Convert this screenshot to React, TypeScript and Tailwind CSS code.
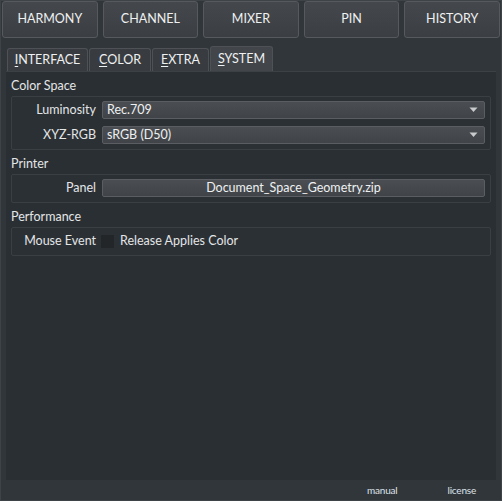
import { ReactNode } from 'react';

const topButtons = ['HARMONY', 'CHANNEL', 'MIXER', 'PIN', 'HISTORY'];

const tabs = [
  { key: 'I', rest: 'NTERFACE', w: 'w-[81px]' },
  { key: 'C', rest: 'OLOR', w: 'w-[62px]' },
  { key: 'E', rest: 'XTRA', w: 'w-[57px]' },
  { key: 'S', rest: 'YSTEM', w: 'w-[63px]', active: true },
];

function Arrow() {
  return (
    <svg width="9" height="6" viewBox="0 0 9 6" className="shrink-0">
      <path d="M0.5 0.5 H8.5 L4.5 5 Z" fill="#c8cacc" />
    </svg>
  );
}

function Combo({ value }: { value: string }) {
  return (
    <div className="flex h-[18px] flex-1 items-center justify-between rounded-[2px] border border-[#5a5e62] bg-gradient-to-b from-[#4a4e52] to-[#404448] pl-[4px] pr-[6px] text-[#eff0f1]">
      <span>{value}</span>
      <Arrow />
    </div>
  );
}

function Row({ label, children }: { label: string; children: ReactNode }) {
  return (
    <div className="flex items-center">
      <div className="w-[85px] pr-[6px] text-right text-[#e3e5e7]">{label}</div>
      {children}
    </div>
  );
}

function Group({ title, children }: { title: string; children: ReactNode }) {
  return (
    <div>
      <div className="flex h-[19px] items-center text-[#e3e5e7]">{title}</div>
      <div className="rounded-[2px] border border-[#3a3f43] bg-[#2b3034] px-[5px]">{children}</div>
    </div>
  );
}

export default function App() {
  return (
    <div
      className="flex h-[501px] w-[502px] flex-col border border-[#3e4347] bg-[#31363b] text-[12.5px] leading-none"
      style={{ fontFamily: 'Lato, "Noto Sans", sans-serif' }}
    >
      <div className="flex gap-[5px] px-[1px]">
        {topButtons.map((b) => (
          <div
            key={b}
            className="flex h-[37px] flex-1 items-center justify-center rounded-[3px] border border-[#56595d] bg-gradient-to-b from-[#44484c] to-[#3b3f43] text-[12.5px] text-[#eff0f1]"
          >
            {b}
          </div>
        ))}
      </div>

      <div className="mt-[8px] flex items-end gap-[1px] pl-[6px]">
        {tabs.map((t) => (
          <div
            key={t.key}
            className={`${t.w} flex items-center justify-center rounded-t-[3px] border border-b-0 border-[#4e5256] text-[#eff0f1] ${
              t.active ? 'h-[25px] bg-[#42464a]' : 'h-[23px] bg-[#383c40]'
            }`}
          >
            <span>
              <u className="underline-offset-2">{t.key}</u>
              {t.rest}
            </span>
          </div>
        ))}
      </div>

      <div className="mx-[5px] flex flex-1 flex-col gap-[5px] border-t border-[#3c4145] bg-[#2a2f33] px-[5px] pt-[5px]">
        <Group title="Color Space">
          <div className="flex flex-col gap-[7px] pb-[5px] pt-[4px]">
            <Row label="Luminosity">
              <Combo value="Rec.709" />
            </Row>
            <Row label="XYZ-RGB">
              <Combo value="sRGB (D50)" />
            </Row>
          </div>
        </Group>

        <Group title="Printer">
          <div className="pb-[5px] pt-[4px]">
            <Row label="Panel">
              <div className="flex h-[18px] flex-1 items-center justify-center rounded-[2px] border border-[#5a5e62] bg-gradient-to-b from-[#4a4e52] to-[#404448] text-[#eff0f1]">
                Document_Space_Geometry.zip
              </div>
            </Row>
          </div>
        </Group>

        <Group title="Performance">
          <div className="py-[7px]">
            <Row label="Mouse Event">
              <div className="flex items-center gap-[6px]">
                <div className="ml-[-1px] h-[13px] w-[13px] bg-[#232629]" />
                <span className="text-[#e3e5e7]">Release Applies Color</span>
              </div>
            </Row>
          </div>
        </Group>
      </div>

      <div className="flex h-[20px] items-center text-[10px] tracking-[-0.2px] text-[#dde3ea]">
        <span className="ml-[366px]">manual</span>
        <span className="ml-[50px]">license</span>
      </div>
    </div>
  );
}
